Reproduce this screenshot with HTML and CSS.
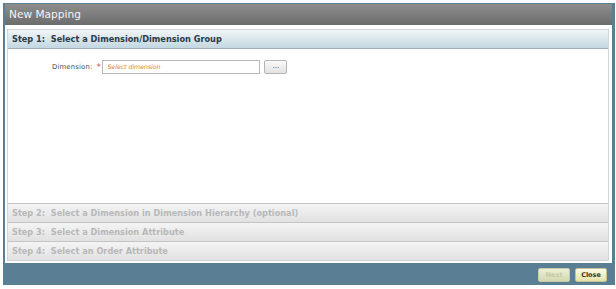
FILE: index.html
```html
<!DOCTYPE html>
<html>
<head>
<meta charset="utf-8">
<link rel="stylesheet" href="styles.css">
</head>
<body>
<div class="window">
  <div class="titlebar">New Mapping</div>
  <div class="body">
    <div class="panel">
      <div class="step step-active">Step 1:&nbsp; Select a Dimension/Dimension Group</div>
      <div class="content">
        <div class="field">
          <span class="label">Dimension:</span>
          <span class="req">*</span>
          <div class="input">Select dimension</div>
          <button class="browse">...</button>
        </div>
      </div>
      <div class="step step-off">Step 2:&nbsp; Select a Dimension in Dimension Hierarchy (optional)</div>
      <div class="step step-off">Step 3:&nbsp; Select a Dimension Attribute</div>
      <div class="step step-off">Step 4:&nbsp; Select an Order Attribute</div>
    </div>
  </div>
  <div class="footer">
    <button class="btn btn-disabled">Next</button>
    <button class="btn btn-close">Close</button>
  </div>
</div>
</body>
</html>
```

FILE: styles.css
```css
html, body {
  margin: 0;
  padding: 0;
  background: #ffffff;
}
body {
  padding: 3px 0 0 3px;
  font-family: "DejaVu Sans", Verdana, sans-serif;
}
.window {
  width: 607px;
  height: 281px;
  background: #5a7e94;
  padding: 1px 3px 0 2px;
  display: flex;
  flex-direction: column;
}
.titlebar {
  height: 21px;
  background: linear-gradient(#8e8e8e, #6c6c6c);
  color: #f4f4f4;
  font-family: "DejaVu Sans", sans-serif;
  font-size: 10.6px;
  line-height: 20px;
  padding-left: 4px;
  flex: none;
}
.body {
  background: #ffffff;
  padding: 4px 3px 2px 2px;
  flex: none;
  height: 232px;
  display: flex;
}
.panel {
  flex: 1;
  border: 1px solid #d4d4d4;
  display: flex;
  flex-direction: column;
}
.step {
  height: 18px;
  line-height: 18px;
  font-size: 8.2px;
  font-weight: bold;
  padding-left: 4px;
  flex: none;
  white-space: nowrap;
}
.step-active {
  background: linear-gradient(#f1f5f7, #c3d7e1);
  color: #2b3a46;
  border-bottom: 1px solid #a3adb3;
}
.step-off {
  background: linear-gradient(#f4f4f4, #e1e1e1);
  color: #b8b8b8;
  border-top: 1px solid #c4c4c4;
}
.content {
  flex: 1;
  background: #ffffff;
  padding-top: 11px;
}
.field {
  display: flex;
  align-items: center;
  padding-left: 44px;
  height: 14px;
}
.label {
  font-size: 6.8px;
  color: #3a4a56;
  letter-spacing: 0.2px;
}
.req {
  color: #e0506a;
  font-size: 9px;
  margin-left: 4px;
  width: 6px;
}
.input {
  width: 152px;
  height: 12px;
  border: 1px solid #b8b8b8;
  margin-left: 0;
  font-size: 6.2px;
  font-style: italic;
  color: #e0802a;
  line-height: 12px;
  padding-left: 4px;
}
.browse {
  margin-left: 4px;
  width: 23px;
  height: 14px;
  border: 1px solid #b4b4b4;
  border-radius: 2px;
  background: linear-gradient(#fafafa, #e2e2e2);
  font-size: 7px;
  color: #444;
  padding: 0 0 3px 0;
  font-family: "DejaVu Sans", sans-serif;
  line-height: 8px;
}
.footer {
  flex: 1;
  display: flex;
  justify-content: flex-end;
  align-items: flex-start;
  padding-top: 5px;
  padding-right: 5px;
  gap: 5px;
}
.btn {
  width: 32px;
  height: 14px;
  border-radius: 2px;
  font-family: "DejaVu Sans", sans-serif;
  font-size: 6.5px;
  font-weight: bold;
  padding: 0;
  line-height: 12px;
}
.btn-disabled {
  background: linear-gradient(#eef0d4, #d4d8b0);
  border: 1px solid #c8cca8;
  color: #c6caa8;
}
.btn-close {
  background: linear-gradient(#fbfbe4, #e6e2a8);
  border: 1px solid #c4c098;
  color: #2e3a24;
}
```
